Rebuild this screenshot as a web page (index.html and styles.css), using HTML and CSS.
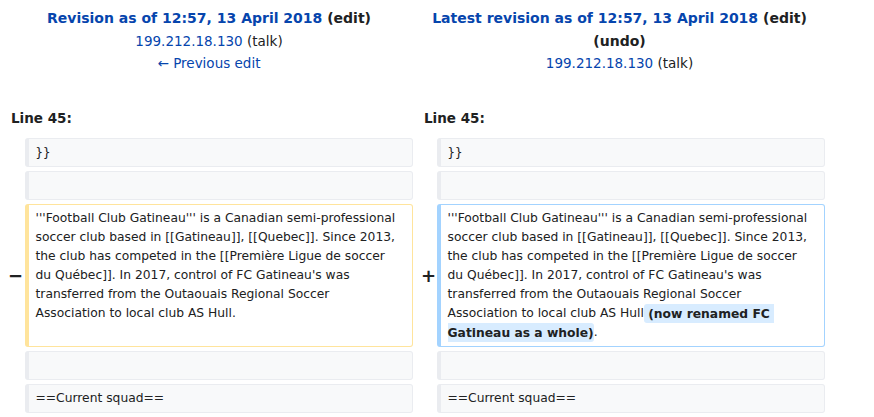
FILE: index.html
```html
<!DOCTYPE html>
<html>
<head>
<meta charset="utf-8">
<link rel="stylesheet" href="styles.css">
</head>
<body>
<div class="diff">
  <div class="title left-title">
    <div class="t-line strong"><a class="link">Revision as of 12:57, 13 April 2018</a> <span class="dark">(edit)</span></div>
    <div class="t-line"><a class="link">199.212.18.130</a> <span class="dark">(talk)</span></div>
    <div class="t-line"><a class="link">← Previous edit</a></div>
  </div>
  <div class="title right-title">
    <div class="t-line strong"><a class="link">Latest revision as of 12:57, 13 April 2018</a> <span class="dark">(edit)</span> <span class="dark">(undo)</span></div>
    <div class="t-line"><a class="link">199.212.18.130</a> <span class="dark">(talk)</span></div>
  </div>

  <div class="lineno lineno-left">Line 45:</div>
  <div class="lineno lineno-right">Line 45:</div>

  <div class="marker"></div>
  <div class="cell context mono">}}</div>
  <div class="marker"></div>
  <div class="cell context mono">}}</div>

  <div class="marker"></div>
  <div class="cell context"></div>
  <div class="marker"></div>
  <div class="cell context"></div>

  <div class="marker minus">−</div>
  <div class="cell deleted">'''Football Club Gatineau''' is a Canadian semi-professional soccer club based in [[Gatineau]], [[Quebec]]. Since 2013, the club has competed in the [[Première Ligue de soccer du Québec]]. In 2017, control of FC Gatineau's was transferred from the Outaouais Regional Soccer Association to local club AS Hull.</div>
  <div class="marker plus">+</div>
  <div class="cell added">'''Football Club Gatineau''' is a Canadian semi-professional soccer club based in [[Gatineau]], [[Quebec]]. Since 2013, the club has competed in the [[Première Ligue de soccer du Québec]]. In 2017, control of FC Gatineau's was transferred from the Outaouais Regional Soccer Association to local club AS Hull<ins class="inline-add"> (now renamed FC Gatineau as a whole)</ins>.</div>

  <div class="marker"></div>
  <div class="cell context"></div>
  <div class="marker"></div>
  <div class="cell context"></div>

  <div class="marker"></div>
  <div class="cell context">==Current squad==</div>
  <div class="marker"></div>
  <div class="cell context">==Current squad==</div>
</div>
</body>
</html>
```

FILE: styles.css
```css
html, body {
  margin: 0;
  padding: 0;
  background: #ffffff;
}

body {
  font-family: "DejaVu Sans", sans-serif;
  color: #202122;
}

.diff {
  display: grid;
  grid-template-columns: 17px 388px 24px 388px;
  margin-left: 8px;
  row-gap: 4px;
  align-items: stretch;
}

.title {
  text-align: center;
  font-size: 13.5px;
  line-height: 22.5px;
  padding-top: 7px;
}

.left-title {
  grid-column: 1 / 3;
  padding-right: 3px;
}

.right-title {
  grid-column: 3 / 5;
  padding-left: 1px;
}

.t-line.strong {
  font-weight: bold;
  font-size: 14px;
}

.link {
  color: #0645ad;
  text-decoration: none;
}

.dark {
  color: #202122;
}

.lineno {
  font-weight: bold;
  font-size: 13.5px;
  line-height: 20px;
  padding-top: 29.5px;
  margin-bottom: 6px;
}

.lineno-left {
  grid-column: 1 / 3;
  padding-left: 3px;
}

.lineno-right {
  grid-column: 3 / 5;
  padding-left: 11px;
}

.marker {
  display: flex;
  align-items: center;
  justify-content: center;
  font-weight: bold;
  font-size: 18px;
  color: #202122;
}

.marker.plus {
  padding-left: 7px;
}

.marker.minus {
  padding-right: 2px;
}

.cell {
  font-size: 12.3px;
  line-height: 19px;
  padding: 4px 11.5px 4px 6.5px;
  border: 1px solid #eaecf0;
  border-left-width: 4px;
  border-radius: 3px;
  white-space: pre-wrap;
  word-wrap: break-word;
  min-height: 19px;
}

.cell.mono {
  font-family: "DejaVu Sans Mono", monospace;
}

.context {
  background: #f8f9fa;
}

.deleted {
  background: #ffffff;
  border-color: #ffe49c;
}

.added {
  background: #ffffff;
  border-color: #a3d3ff;
}

.inline-add {
  text-decoration: none;
  font-weight: bold;
  background: #d8ecff;
  border-radius: 3px;
  padding: 2.5px 0;
}
```
